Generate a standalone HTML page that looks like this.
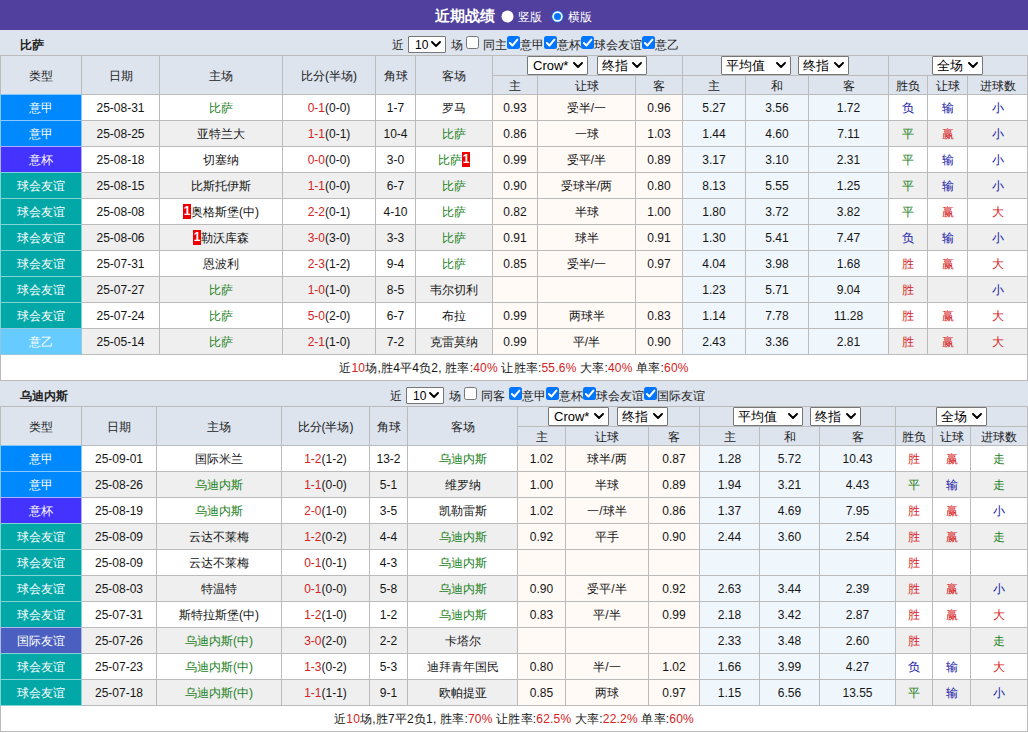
<!DOCTYPE html><html><head><meta charset="utf-8"><style>
html,body{margin:0;padding:0;}
body{width:1028px;height:733px;position:relative;overflow:hidden;background:#fff;font-family:"Liberation Sans",sans-serif;font-size:12px;color:#151515;}
.a{position:absolute;}
.c{text-align:center;white-space:nowrap;overflow:hidden;}
.h{color:#1a1a1a;}
.ty{color:#fff;}
.tb{height:20px;line-height:20px;font-size:12px;color:#222;white-space:nowrap;}
.sel{background:#fff;border:1px solid #767676;border-radius:1px;color:#000;white-space:nowrap;}
.rc{display:inline-block;background:#e00;color:#fff;font-weight:bold;font-size:12px;width:8px;height:15px;line-height:15px;text-align:center;vertical-align:-3px;overflow:hidden;}
</style></head><body><div class="a" style="left:0px;top:0px;width:1028px;height:30px;background:#51409e;"></div><div class="a" style="left:435px;top:6px;height:20px;line-height:20px;font-size:15px;font-weight:bold;color:#fff;white-space:nowrap">近期战绩</div><svg class="a" style="left:501px;top:10px" width="13" height="13" viewBox="0 0 13 13"><circle cx="6.5" cy="6.5" r="6" fill="#fff"/></svg><div class="a" style="left:518px;top:7px;height:20px;line-height:20px;font-size:12px;color:#fff;white-space:nowrap">竖版</div><svg class="a" style="left:551px;top:10px" width="13" height="13" viewBox="0 0 13 13"><circle cx="6.5" cy="6.5" r="6" fill="#0075ff"/><circle cx="6.5" cy="6.5" r="5.2" fill="#fff"/><circle cx="6.5" cy="6.5" r="3.5" fill="#0075ff"/></svg><div class="a" style="left:568px;top:7px;height:20px;line-height:20px;font-size:12px;color:#fff;white-space:nowrap">横版</div><div class="a" style="left:0px;top:30px;width:1028px;height:25px;background:#dde4ee;"></div><div class="a" style="left:20px;top:35px;height:20px;line-height:20px;font-size:12px;font-weight:bold;color:#222;white-space:nowrap">比萨</div><div class="a tb" style="left:392px;top:35px">近</div><div class="a sel" style="left:408px;top:36px;width:36px;height:15px;"><span style="position:absolute;left:6px;top:0;line-height:15px;font-size:12px;top:1px;">10</span><svg width="10" height="6" viewBox="0 0 10 6" style="position:absolute;right:4px;top:4px"><path d="M1 1 L5 5 L9 1" fill="none" stroke="#000" stroke-width="1.9" stroke-linecap="round" stroke-linejoin="round"/></svg></div><div class="a tb" style="left:451px;top:35px">场</div><svg class="a" style="left:466px;top:36px" width="13" height="13" viewBox="0 0 13 13"><rect x="0.5" y="0.5" width="12" height="12" rx="2" fill="#fff" stroke="#767676" stroke-width="1"/></svg><div class="a tb" style="left:483px;top:35px">同主</div><svg class="a" style="left:507px;top:36px" width="13" height="13" viewBox="0 0 13 13"><rect x="0" y="0" width="13" height="13" rx="2.5" fill="#0075ff"/><path d="M2.9 7.0 L5.4 9.5 L10.4 3.6" fill="none" stroke="#fff" stroke-width="2" stroke-linecap="round" stroke-linejoin="round"/></svg><div class="a tb" style="left:520px;top:35px">意甲</div><svg class="a" style="left:544px;top:36px" width="13" height="13" viewBox="0 0 13 13"><rect x="0" y="0" width="13" height="13" rx="2.5" fill="#0075ff"/><path d="M2.9 7.0 L5.4 9.5 L10.4 3.6" fill="none" stroke="#fff" stroke-width="2" stroke-linecap="round" stroke-linejoin="round"/></svg><div class="a tb" style="left:557px;top:35px">意杯</div><svg class="a" style="left:581px;top:36px" width="13" height="13" viewBox="0 0 13 13"><rect x="0" y="0" width="13" height="13" rx="2.5" fill="#0075ff"/><path d="M2.9 7.0 L5.4 9.5 L10.4 3.6" fill="none" stroke="#fff" stroke-width="2" stroke-linecap="round" stroke-linejoin="round"/></svg><div class="a tb" style="left:594px;top:35px">球会友谊</div><svg class="a" style="left:642px;top:36px" width="13" height="13" viewBox="0 0 13 13"><rect x="0" y="0" width="13" height="13" rx="2.5" fill="#0075ff"/><path d="M2.9 7.0 L5.4 9.5 L10.4 3.6" fill="none" stroke="#fff" stroke-width="2" stroke-linecap="round" stroke-linejoin="round"/></svg><div class="a tb" style="left:655px;top:35px">意乙</div><div class="a" style="left:0px;top:55px;width:1028px;height:40px;background:#dde4ee;"></div><div class="a" style="left:0px;top:95px;width:1027px;height:26px;background:#ffffff;"></div><div class="a" style="left:493px;top:95px;width:190px;height:25px;background:#fffaf6;"></div><div class="a" style="left:683px;top:95px;width:206px;height:25px;background:#f0f7fc;"></div><div class="a" style="left:1px;top:95px;width:80px;height:25px;background:#0088ff;"></div><div class="a" style="left:0px;top:121px;width:1027px;height:26px;background:#efefef;"></div><div class="a" style="left:493px;top:121px;width:190px;height:25px;background:#fffaf6;"></div><div class="a" style="left:683px;top:121px;width:206px;height:25px;background:#f0f7fc;"></div><div class="a" style="left:1px;top:121px;width:80px;height:25px;background:#0088ff;"></div><div class="a" style="left:0px;top:147px;width:1027px;height:26px;background:#ffffff;"></div><div class="a" style="left:493px;top:147px;width:190px;height:25px;background:#fffaf6;"></div><div class="a" style="left:683px;top:147px;width:206px;height:25px;background:#f0f7fc;"></div><div class="a" style="left:1px;top:147px;width:80px;height:25px;background:#4433ff;"></div><div class="a" style="left:0px;top:173px;width:1027px;height:26px;background:#efefef;"></div><div class="a" style="left:493px;top:173px;width:190px;height:25px;background:#fffaf6;"></div><div class="a" style="left:683px;top:173px;width:206px;height:25px;background:#f0f7fc;"></div><div class="a" style="left:1px;top:173px;width:80px;height:25px;background:#02a8a8;"></div><div class="a" style="left:0px;top:199px;width:1027px;height:26px;background:#ffffff;"></div><div class="a" style="left:493px;top:199px;width:190px;height:25px;background:#fffaf6;"></div><div class="a" style="left:683px;top:199px;width:206px;height:25px;background:#f0f7fc;"></div><div class="a" style="left:1px;top:199px;width:80px;height:25px;background:#02a8a8;"></div><div class="a" style="left:0px;top:225px;width:1027px;height:26px;background:#efefef;"></div><div class="a" style="left:493px;top:225px;width:190px;height:25px;background:#fffaf6;"></div><div class="a" style="left:683px;top:225px;width:206px;height:25px;background:#f0f7fc;"></div><div class="a" style="left:1px;top:225px;width:80px;height:25px;background:#02a8a8;"></div><div class="a" style="left:0px;top:251px;width:1027px;height:26px;background:#ffffff;"></div><div class="a" style="left:493px;top:251px;width:190px;height:25px;background:#fffaf6;"></div><div class="a" style="left:683px;top:251px;width:206px;height:25px;background:#f0f7fc;"></div><div class="a" style="left:1px;top:251px;width:80px;height:25px;background:#02a8a8;"></div><div class="a" style="left:0px;top:277px;width:1027px;height:26px;background:#efefef;"></div><div class="a" style="left:493px;top:277px;width:190px;height:25px;background:#fffaf6;"></div><div class="a" style="left:683px;top:277px;width:206px;height:25px;background:#f0f7fc;"></div><div class="a" style="left:1px;top:277px;width:80px;height:25px;background:#02a8a8;"></div><div class="a" style="left:0px;top:303px;width:1027px;height:26px;background:#ffffff;"></div><div class="a" style="left:493px;top:303px;width:190px;height:25px;background:#fffaf6;"></div><div class="a" style="left:683px;top:303px;width:206px;height:25px;background:#f0f7fc;"></div><div class="a" style="left:1px;top:303px;width:80px;height:25px;background:#02a8a8;"></div><div class="a" style="left:0px;top:329px;width:1027px;height:26px;background:#efefef;"></div><div class="a" style="left:493px;top:329px;width:190px;height:25px;background:#fffaf6;"></div><div class="a" style="left:683px;top:329px;width:206px;height:25px;background:#f0f7fc;"></div><div class="a" style="left:1px;top:329px;width:80px;height:25px;background:#66ccff;"></div><div class="a" style="left:0px;top:355px;width:1028px;height:26px;background:#fff;"></div><div class="a" style="left:0px;top:55px;width:1028px;height:1px;background:#bbbbbb;"></div><div class="a" style="left:492px;top:75px;width:535px;height:1px;background:#bbbbbb;"></div><div class="a" style="left:0px;top:94px;width:1028px;height:1px;background:#bbbbbb;"></div><div class="a" style="left:0px;top:120px;width:1028px;height:1px;background:#bbbbbb;"></div><div class="a" style="left:0px;top:146px;width:1028px;height:1px;background:#bbbbbb;"></div><div class="a" style="left:0px;top:172px;width:1028px;height:1px;background:#bbbbbb;"></div><div class="a" style="left:0px;top:198px;width:1028px;height:1px;background:#bbbbbb;"></div><div class="a" style="left:0px;top:224px;width:1028px;height:1px;background:#bbbbbb;"></div><div class="a" style="left:0px;top:250px;width:1028px;height:1px;background:#bbbbbb;"></div><div class="a" style="left:0px;top:276px;width:1028px;height:1px;background:#bbbbbb;"></div><div class="a" style="left:0px;top:302px;width:1028px;height:1px;background:#bbbbbb;"></div><div class="a" style="left:0px;top:328px;width:1028px;height:1px;background:#bbbbbb;"></div><div class="a" style="left:0px;top:354px;width:1028px;height:1px;background:#bbbbbb;"></div><div class="a" style="left:0px;top:380px;width:1028px;height:1px;background:#bbbbbb;"></div><div class="a" style="left:0px;top:55px;width:1px;height:326px;background:#bbbbbb;"></div><div class="a" style="left:1027px;top:55px;width:1px;height:326px;background:#bbbbbb;"></div><div class="a" style="left:81px;top:55px;width:1px;height:300px;background:#bbbbbb;"></div><div class="a" style="left:159px;top:55px;width:1px;height:300px;background:#bbbbbb;"></div><div class="a" style="left:282px;top:55px;width:1px;height:300px;background:#bbbbbb;"></div><div class="a" style="left:375px;top:55px;width:1px;height:300px;background:#bbbbbb;"></div><div class="a" style="left:415px;top:55px;width:1px;height:300px;background:#bbbbbb;"></div><div class="a" style="left:492px;top:55px;width:1px;height:300px;background:#bbbbbb;"></div><div class="a" style="left:537px;top:75px;width:1px;height:280px;background:#bbbbbb;"></div><div class="a" style="left:635px;top:75px;width:1px;height:280px;background:#bbbbbb;"></div><div class="a" style="left:682px;top:55px;width:1px;height:300px;background:#bbbbbb;"></div><div class="a" style="left:745px;top:75px;width:1px;height:280px;background:#bbbbbb;"></div><div class="a" style="left:808px;top:75px;width:1px;height:280px;background:#bbbbbb;"></div><div class="a" style="left:888px;top:55px;width:1px;height:300px;background:#bbbbbb;"></div><div class="a" style="left:927px;top:75px;width:1px;height:280px;background:#bbbbbb;"></div><div class="a" style="left:967px;top:75px;width:1px;height:280px;background:#bbbbbb;"></div><div class="a" style="left:0px;top:94px;width:1px;height:27px;background:#85c9ff;"></div><div class="a" style="left:81px;top:94px;width:1px;height:27px;background:#85c9ff;"></div><div class="a" style="left:0px;top:94px;width:82px;height:1px;background:#85c9ff;"></div><div class="a" style="left:0px;top:120px;width:82px;height:1px;background:#85c9ff;"></div><div class="a" style="left:0px;top:120px;width:1px;height:27px;background:#85c9ff;"></div><div class="a" style="left:81px;top:120px;width:1px;height:27px;background:#85c9ff;"></div><div class="a" style="left:0px;top:120px;width:82px;height:1px;background:#85c9ff;"></div><div class="a" style="left:0px;top:146px;width:82px;height:1px;background:#85c9ff;"></div><div class="a" style="left:0px;top:146px;width:1px;height:27px;background:#b5adff;"></div><div class="a" style="left:81px;top:146px;width:1px;height:27px;background:#b5adff;"></div><div class="a" style="left:0px;top:146px;width:82px;height:1px;background:#b5adff;"></div><div class="a" style="left:0px;top:172px;width:82px;height:1px;background:#b5adff;"></div><div class="a" style="left:0px;top:172px;width:1px;height:27px;background:#81d4d4;"></div><div class="a" style="left:81px;top:172px;width:1px;height:27px;background:#81d4d4;"></div><div class="a" style="left:0px;top:172px;width:82px;height:1px;background:#81d4d4;"></div><div class="a" style="left:0px;top:198px;width:82px;height:1px;background:#81d4d4;"></div><div class="a" style="left:0px;top:198px;width:1px;height:27px;background:#81d4d4;"></div><div class="a" style="left:81px;top:198px;width:1px;height:27px;background:#81d4d4;"></div><div class="a" style="left:0px;top:198px;width:82px;height:1px;background:#81d4d4;"></div><div class="a" style="left:0px;top:224px;width:82px;height:1px;background:#81d4d4;"></div><div class="a" style="left:0px;top:224px;width:1px;height:27px;background:#81d4d4;"></div><div class="a" style="left:81px;top:224px;width:1px;height:27px;background:#81d4d4;"></div><div class="a" style="left:0px;top:224px;width:82px;height:1px;background:#81d4d4;"></div><div class="a" style="left:0px;top:250px;width:82px;height:1px;background:#81d4d4;"></div><div class="a" style="left:0px;top:250px;width:1px;height:27px;background:#81d4d4;"></div><div class="a" style="left:81px;top:250px;width:1px;height:27px;background:#81d4d4;"></div><div class="a" style="left:0px;top:250px;width:82px;height:1px;background:#81d4d4;"></div><div class="a" style="left:0px;top:276px;width:82px;height:1px;background:#81d4d4;"></div><div class="a" style="left:0px;top:276px;width:1px;height:27px;background:#81d4d4;"></div><div class="a" style="left:81px;top:276px;width:1px;height:27px;background:#81d4d4;"></div><div class="a" style="left:0px;top:276px;width:82px;height:1px;background:#81d4d4;"></div><div class="a" style="left:0px;top:302px;width:82px;height:1px;background:#81d4d4;"></div><div class="a" style="left:0px;top:302px;width:1px;height:27px;background:#81d4d4;"></div><div class="a" style="left:81px;top:302px;width:1px;height:27px;background:#81d4d4;"></div><div class="a" style="left:0px;top:302px;width:82px;height:1px;background:#81d4d4;"></div><div class="a" style="left:0px;top:328px;width:82px;height:1px;background:#81d4d4;"></div><div class="a" style="left:0px;top:328px;width:1px;height:27px;background:#94c7e1;"></div><div class="a" style="left:81px;top:328px;width:1px;height:27px;background:#94c7e1;"></div><div class="a" style="left:0px;top:328px;width:82px;height:1px;background:#94c7e1;"></div><div class="a" style="left:0px;top:354px;width:82px;height:1px;background:#94c7e1;"></div><div class="a c h" style="left:1px;top:57px;width:80px;height:38px;line-height:38px;">类型</div><div class="a c h" style="left:82px;top:57px;width:77px;height:38px;line-height:38px;">日期</div><div class="a c h" style="left:160px;top:57px;width:122px;height:38px;line-height:38px;">主场</div><div class="a c h" style="left:283px;top:57px;width:92px;height:38px;line-height:38px;">比分(半场)</div><div class="a c h" style="left:376px;top:57px;width:39px;height:38px;line-height:38px;">角球</div><div class="a c h" style="left:416px;top:57px;width:76px;height:38px;line-height:38px;">客场</div><div class="a c h" style="left:493px;top:77px;width:44px;height:18px;line-height:18px;">主</div><div class="a c h" style="left:538px;top:77px;width:97px;height:18px;line-height:18px;">让球</div><div class="a c h" style="left:636px;top:77px;width:46px;height:18px;line-height:18px;">客</div><div class="a c h" style="left:683px;top:77px;width:62px;height:18px;line-height:18px;">主</div><div class="a c h" style="left:746px;top:77px;width:62px;height:18px;line-height:18px;">和</div><div class="a c h" style="left:809px;top:77px;width:79px;height:18px;line-height:18px;">客</div><div class="a c h" style="left:889px;top:77px;width:38px;height:18px;line-height:18px;">胜负</div><div class="a c h" style="left:928px;top:77px;width:39px;height:18px;line-height:18px;">让球</div><div class="a c h" style="left:968px;top:77px;width:59px;height:18px;line-height:18px;">进球数</div><div class="a c ty" style="left:1px;top:96px;width:80px;height:25px;line-height:25px;">意甲</div><div class="a c" style="left:82px;top:96px;width:77px;height:25px;line-height:25px;">25-08-31</div><div class="a c" style="left:160px;top:96px;width:122px;height:25px;line-height:25px;"><span style="color:#1b7f1b">比萨</span></div><div class="a c" style="left:283px;top:96px;width:92px;height:25px;line-height:25px;"><span style="color:#d62222">0-1</span>(0-0)</div><div class="a c" style="left:376px;top:96px;width:39px;height:25px;line-height:25px;">1-7</div><div class="a c" style="left:416px;top:96px;width:76px;height:25px;line-height:25px;">罗马</div><div class="a c" style="left:493px;top:96px;width:44px;height:25px;line-height:25px;">0.93</div><div class="a c" style="left:538px;top:96px;width:97px;height:25px;line-height:25px;">受半/一</div><div class="a c" style="left:636px;top:96px;width:46px;height:25px;line-height:25px;">0.96</div><div class="a c" style="left:683px;top:96px;width:62px;height:25px;line-height:25px;">5.27</div><div class="a c" style="left:746px;top:96px;width:62px;height:25px;line-height:25px;">3.56</div><div class="a c" style="left:809px;top:96px;width:79px;height:25px;line-height:25px;">1.72</div><div class="a c" style="left:889px;top:96px;width:38px;height:25px;line-height:25px;"><span style="color:#1414a8">负</span></div><div class="a c" style="left:928px;top:96px;width:39px;height:25px;line-height:25px;"><span style="color:#1414a8">输</span></div><div class="a c" style="left:968px;top:96px;width:59px;height:25px;line-height:25px;"><span style="color:#1414a8">小</span></div><div class="a c ty" style="left:1px;top:122px;width:80px;height:25px;line-height:25px;">意甲</div><div class="a c" style="left:82px;top:122px;width:77px;height:25px;line-height:25px;">25-08-25</div><div class="a c" style="left:160px;top:122px;width:122px;height:25px;line-height:25px;">亚特兰大</div><div class="a c" style="left:283px;top:122px;width:92px;height:25px;line-height:25px;"><span style="color:#d62222">1-1</span>(0-1)</div><div class="a c" style="left:376px;top:122px;width:39px;height:25px;line-height:25px;">10-4</div><div class="a c" style="left:416px;top:122px;width:76px;height:25px;line-height:25px;"><span style="color:#1b7f1b">比萨</span></div><div class="a c" style="left:493px;top:122px;width:44px;height:25px;line-height:25px;">0.86</div><div class="a c" style="left:538px;top:122px;width:97px;height:25px;line-height:25px;">一球</div><div class="a c" style="left:636px;top:122px;width:46px;height:25px;line-height:25px;">1.03</div><div class="a c" style="left:683px;top:122px;width:62px;height:25px;line-height:25px;">1.44</div><div class="a c" style="left:746px;top:122px;width:62px;height:25px;line-height:25px;">4.60</div><div class="a c" style="left:809px;top:122px;width:79px;height:25px;line-height:25px;">7.11</div><div class="a c" style="left:889px;top:122px;width:38px;height:25px;line-height:25px;"><span style="color:#1b7f1b">平</span></div><div class="a c" style="left:928px;top:122px;width:39px;height:25px;line-height:25px;"><span style="color:#d62222">赢</span></div><div class="a c" style="left:968px;top:122px;width:59px;height:25px;line-height:25px;"><span style="color:#1414a8">小</span></div><div class="a c ty" style="left:1px;top:148px;width:80px;height:25px;line-height:25px;">意杯</div><div class="a c" style="left:82px;top:148px;width:77px;height:25px;line-height:25px;">25-08-18</div><div class="a c" style="left:160px;top:148px;width:122px;height:25px;line-height:25px;">切塞纳</div><div class="a c" style="left:283px;top:148px;width:92px;height:25px;line-height:25px;"><span style="color:#d62222">0-0</span>(0-0)</div><div class="a c" style="left:376px;top:148px;width:39px;height:25px;line-height:25px;">3-0</div><div class="a c" style="left:416px;top:148px;width:76px;height:25px;line-height:25px;"><span style="color:#1b7f1b">比萨</span><span class="rc">1</span></div><div class="a c" style="left:493px;top:148px;width:44px;height:25px;line-height:25px;">0.99</div><div class="a c" style="left:538px;top:148px;width:97px;height:25px;line-height:25px;">受平/半</div><div class="a c" style="left:636px;top:148px;width:46px;height:25px;line-height:25px;">0.89</div><div class="a c" style="left:683px;top:148px;width:62px;height:25px;line-height:25px;">3.17</div><div class="a c" style="left:746px;top:148px;width:62px;height:25px;line-height:25px;">3.10</div><div class="a c" style="left:809px;top:148px;width:79px;height:25px;line-height:25px;">2.31</div><div class="a c" style="left:889px;top:148px;width:38px;height:25px;line-height:25px;"><span style="color:#1b7f1b">平</span></div><div class="a c" style="left:928px;top:148px;width:39px;height:25px;line-height:25px;"><span style="color:#1414a8">输</span></div><div class="a c" style="left:968px;top:148px;width:59px;height:25px;line-height:25px;"><span style="color:#1414a8">小</span></div><div class="a c ty" style="left:1px;top:174px;width:80px;height:25px;line-height:25px;">球会友谊</div><div class="a c" style="left:82px;top:174px;width:77px;height:25px;line-height:25px;">25-08-15</div><div class="a c" style="left:160px;top:174px;width:122px;height:25px;line-height:25px;">比斯托伊斯</div><div class="a c" style="left:283px;top:174px;width:92px;height:25px;line-height:25px;"><span style="color:#d62222">1-1</span>(0-0)</div><div class="a c" style="left:376px;top:174px;width:39px;height:25px;line-height:25px;">6-7</div><div class="a c" style="left:416px;top:174px;width:76px;height:25px;line-height:25px;"><span style="color:#1b7f1b">比萨</span></div><div class="a c" style="left:493px;top:174px;width:44px;height:25px;line-height:25px;">0.90</div><div class="a c" style="left:538px;top:174px;width:97px;height:25px;line-height:25px;">受球半/两</div><div class="a c" style="left:636px;top:174px;width:46px;height:25px;line-height:25px;">0.80</div><div class="a c" style="left:683px;top:174px;width:62px;height:25px;line-height:25px;">8.13</div><div class="a c" style="left:746px;top:174px;width:62px;height:25px;line-height:25px;">5.55</div><div class="a c" style="left:809px;top:174px;width:79px;height:25px;line-height:25px;">1.25</div><div class="a c" style="left:889px;top:174px;width:38px;height:25px;line-height:25px;"><span style="color:#1b7f1b">平</span></div><div class="a c" style="left:928px;top:174px;width:39px;height:25px;line-height:25px;"><span style="color:#1414a8">输</span></div><div class="a c" style="left:968px;top:174px;width:59px;height:25px;line-height:25px;"><span style="color:#1414a8">小</span></div><div class="a c ty" style="left:1px;top:200px;width:80px;height:25px;line-height:25px;">球会友谊</div><div class="a c" style="left:82px;top:200px;width:77px;height:25px;line-height:25px;">25-08-08</div><div class="a c" style="left:160px;top:200px;width:122px;height:25px;line-height:25px;"><span class="rc">1</span>奥格斯堡(中)</div><div class="a c" style="left:283px;top:200px;width:92px;height:25px;line-height:25px;"><span style="color:#d62222">2-2</span>(0-1)</div><div class="a c" style="left:376px;top:200px;width:39px;height:25px;line-height:25px;">4-10</div><div class="a c" style="left:416px;top:200px;width:76px;height:25px;line-height:25px;"><span style="color:#1b7f1b">比萨</span></div><div class="a c" style="left:493px;top:200px;width:44px;height:25px;line-height:25px;">0.82</div><div class="a c" style="left:538px;top:200px;width:97px;height:25px;line-height:25px;">半球</div><div class="a c" style="left:636px;top:200px;width:46px;height:25px;line-height:25px;">1.00</div><div class="a c" style="left:683px;top:200px;width:62px;height:25px;line-height:25px;">1.80</div><div class="a c" style="left:746px;top:200px;width:62px;height:25px;line-height:25px;">3.72</div><div class="a c" style="left:809px;top:200px;width:79px;height:25px;line-height:25px;">3.82</div><div class="a c" style="left:889px;top:200px;width:38px;height:25px;line-height:25px;"><span style="color:#1b7f1b">平</span></div><div class="a c" style="left:928px;top:200px;width:39px;height:25px;line-height:25px;"><span style="color:#d62222">赢</span></div><div class="a c" style="left:968px;top:200px;width:59px;height:25px;line-height:25px;"><span style="color:#d62222">大</span></div><div class="a c ty" style="left:1px;top:226px;width:80px;height:25px;line-height:25px;">球会友谊</div><div class="a c" style="left:82px;top:226px;width:77px;height:25px;line-height:25px;">25-08-06</div><div class="a c" style="left:160px;top:226px;width:122px;height:25px;line-height:25px;"><span class="rc">1</span>勒沃库森</div><div class="a c" style="left:283px;top:226px;width:92px;height:25px;line-height:25px;"><span style="color:#d62222">3-0</span>(3-0)</div><div class="a c" style="left:376px;top:226px;width:39px;height:25px;line-height:25px;">3-3</div><div class="a c" style="left:416px;top:226px;width:76px;height:25px;line-height:25px;"><span style="color:#1b7f1b">比萨</span></div><div class="a c" style="left:493px;top:226px;width:44px;height:25px;line-height:25px;">0.91</div><div class="a c" style="left:538px;top:226px;width:97px;height:25px;line-height:25px;">球半</div><div class="a c" style="left:636px;top:226px;width:46px;height:25px;line-height:25px;">0.91</div><div class="a c" style="left:683px;top:226px;width:62px;height:25px;line-height:25px;">1.30</div><div class="a c" style="left:746px;top:226px;width:62px;height:25px;line-height:25px;">5.41</div><div class="a c" style="left:809px;top:226px;width:79px;height:25px;line-height:25px;">7.47</div><div class="a c" style="left:889px;top:226px;width:38px;height:25px;line-height:25px;"><span style="color:#1414a8">负</span></div><div class="a c" style="left:928px;top:226px;width:39px;height:25px;line-height:25px;"><span style="color:#1414a8">输</span></div><div class="a c" style="left:968px;top:226px;width:59px;height:25px;line-height:25px;"><span style="color:#1414a8">小</span></div><div class="a c ty" style="left:1px;top:252px;width:80px;height:25px;line-height:25px;">球会友谊</div><div class="a c" style="left:82px;top:252px;width:77px;height:25px;line-height:25px;">25-07-31</div><div class="a c" style="left:160px;top:252px;width:122px;height:25px;line-height:25px;">恩波利</div><div class="a c" style="left:283px;top:252px;width:92px;height:25px;line-height:25px;"><span style="color:#d62222">2-3</span>(1-2)</div><div class="a c" style="left:376px;top:252px;width:39px;height:25px;line-height:25px;">9-4</div><div class="a c" style="left:416px;top:252px;width:76px;height:25px;line-height:25px;"><span style="color:#1b7f1b">比萨</span></div><div class="a c" style="left:493px;top:252px;width:44px;height:25px;line-height:25px;">0.85</div><div class="a c" style="left:538px;top:252px;width:97px;height:25px;line-height:25px;">受半/一</div><div class="a c" style="left:636px;top:252px;width:46px;height:25px;line-height:25px;">0.97</div><div class="a c" style="left:683px;top:252px;width:62px;height:25px;line-height:25px;">4.04</div><div class="a c" style="left:746px;top:252px;width:62px;height:25px;line-height:25px;">3.98</div><div class="a c" style="left:809px;top:252px;width:79px;height:25px;line-height:25px;">1.68</div><div class="a c" style="left:889px;top:252px;width:38px;height:25px;line-height:25px;"><span style="color:#d62222">胜</span></div><div class="a c" style="left:928px;top:252px;width:39px;height:25px;line-height:25px;"><span style="color:#d62222">赢</span></div><div class="a c" style="left:968px;top:252px;width:59px;height:25px;line-height:25px;"><span style="color:#d62222">大</span></div><div class="a c ty" style="left:1px;top:278px;width:80px;height:25px;line-height:25px;">球会友谊</div><div class="a c" style="left:82px;top:278px;width:77px;height:25px;line-height:25px;">25-07-27</div><div class="a c" style="left:160px;top:278px;width:122px;height:25px;line-height:25px;"><span style="color:#1b7f1b">比萨</span></div><div class="a c" style="left:283px;top:278px;width:92px;height:25px;line-height:25px;"><span style="color:#d62222">1-0</span>(1-0)</div><div class="a c" style="left:376px;top:278px;width:39px;height:25px;line-height:25px;">8-5</div><div class="a c" style="left:416px;top:278px;width:76px;height:25px;line-height:25px;">韦尔切利</div><div class="a c" style="left:493px;top:278px;width:44px;height:25px;line-height:25px;"></div><div class="a c" style="left:538px;top:278px;width:97px;height:25px;line-height:25px;"></div><div class="a c" style="left:636px;top:278px;width:46px;height:25px;line-height:25px;"></div><div class="a c" style="left:683px;top:278px;width:62px;height:25px;line-height:25px;">1.23</div><div class="a c" style="left:746px;top:278px;width:62px;height:25px;line-height:25px;">5.71</div><div class="a c" style="left:809px;top:278px;width:79px;height:25px;line-height:25px;">9.04</div><div class="a c" style="left:889px;top:278px;width:38px;height:25px;line-height:25px;"><span style="color:#d62222">胜</span></div><div class="a c" style="left:928px;top:278px;width:39px;height:25px;line-height:25px;"></div><div class="a c" style="left:968px;top:278px;width:59px;height:25px;line-height:25px;"><span style="color:#1414a8">小</span></div><div class="a c ty" style="left:1px;top:304px;width:80px;height:25px;line-height:25px;">球会友谊</div><div class="a c" style="left:82px;top:304px;width:77px;height:25px;line-height:25px;">25-07-24</div><div class="a c" style="left:160px;top:304px;width:122px;height:25px;line-height:25px;"><span style="color:#1b7f1b">比萨</span></div><div class="a c" style="left:283px;top:304px;width:92px;height:25px;line-height:25px;"><span style="color:#d62222">5-0</span>(2-0)</div><div class="a c" style="left:376px;top:304px;width:39px;height:25px;line-height:25px;">6-7</div><div class="a c" style="left:416px;top:304px;width:76px;height:25px;line-height:25px;">布拉</div><div class="a c" style="left:493px;top:304px;width:44px;height:25px;line-height:25px;">0.99</div><div class="a c" style="left:538px;top:304px;width:97px;height:25px;line-height:25px;">两球半</div><div class="a c" style="left:636px;top:304px;width:46px;height:25px;line-height:25px;">0.83</div><div class="a c" style="left:683px;top:304px;width:62px;height:25px;line-height:25px;">1.14</div><div class="a c" style="left:746px;top:304px;width:62px;height:25px;line-height:25px;">7.78</div><div class="a c" style="left:809px;top:304px;width:79px;height:25px;line-height:25px;">11.28</div><div class="a c" style="left:889px;top:304px;width:38px;height:25px;line-height:25px;"><span style="color:#d62222">胜</span></div><div class="a c" style="left:928px;top:304px;width:39px;height:25px;line-height:25px;"><span style="color:#d62222">赢</span></div><div class="a c" style="left:968px;top:304px;width:59px;height:25px;line-height:25px;"><span style="color:#d62222">大</span></div><div class="a c ty" style="left:1px;top:330px;width:80px;height:25px;line-height:25px;">意乙</div><div class="a c" style="left:82px;top:330px;width:77px;height:25px;line-height:25px;">25-05-14</div><div class="a c" style="left:160px;top:330px;width:122px;height:25px;line-height:25px;"><span style="color:#1b7f1b">比萨</span></div><div class="a c" style="left:283px;top:330px;width:92px;height:25px;line-height:25px;"><span style="color:#d62222">2-1</span>(1-0)</div><div class="a c" style="left:376px;top:330px;width:39px;height:25px;line-height:25px;">7-2</div><div class="a c" style="left:416px;top:330px;width:76px;height:25px;line-height:25px;">克雷莫纳</div><div class="a c" style="left:493px;top:330px;width:44px;height:25px;line-height:25px;">0.99</div><div class="a c" style="left:538px;top:330px;width:97px;height:25px;line-height:25px;">平/半</div><div class="a c" style="left:636px;top:330px;width:46px;height:25px;line-height:25px;">0.90</div><div class="a c" style="left:683px;top:330px;width:62px;height:25px;line-height:25px;">2.43</div><div class="a c" style="left:746px;top:330px;width:62px;height:25px;line-height:25px;">3.36</div><div class="a c" style="left:809px;top:330px;width:79px;height:25px;line-height:25px;">2.81</div><div class="a c" style="left:889px;top:330px;width:38px;height:25px;line-height:25px;"><span style="color:#d62222">胜</span></div><div class="a c" style="left:928px;top:330px;width:39px;height:25px;line-height:25px;"><span style="color:#d62222">赢</span></div><div class="a c" style="left:968px;top:330px;width:59px;height:25px;line-height:25px;"><span style="color:#d62222">大</span></div><div class="a c" style="left:1px;top:356px;width:1026px;height:25px;line-height:25px;letter-spacing:0.2px;">近<span style="color:#d62222">10</span>场,胜4平4负2, 胜率:<span style="color:#d62222">40%</span> 让胜率:<span style="color:#d62222">55.6%</span> 大率:<span style="color:#d62222">40%</span> 单率:<span style="color:#d62222">60%</span></div><div class="a sel" style="left:527px;top:56px;width:59px;height:17px;"><span style="position:absolute;left:5px;top:0;line-height:17px;font-size:13px;">Crow*</span><svg width="10" height="6" viewBox="0 0 10 6" style="position:absolute;right:4px;top:5px"><path d="M1 1 L5 5 L9 1" fill="none" stroke="#000" stroke-width="1.9" stroke-linecap="round" stroke-linejoin="round"/></svg></div><div class="a sel" style="left:597px;top:56px;width:48px;height:17px;"><span style="position:absolute;left:4px;top:0;line-height:17px;font-size:13px;">终指</span><svg width="10" height="6" viewBox="0 0 10 6" style="position:absolute;right:4px;top:5px"><path d="M1 1 L5 5 L9 1" fill="none" stroke="#000" stroke-width="1.9" stroke-linecap="round" stroke-linejoin="round"/></svg></div><div class="a sel" style="left:721px;top:56px;width:68px;height:17px;"><span style="position:absolute;left:4px;top:0;line-height:17px;font-size:13px;">平均值</span><svg width="10" height="6" viewBox="0 0 10 6" style="position:absolute;right:4px;top:5px"><path d="M1 1 L5 5 L9 1" fill="none" stroke="#000" stroke-width="1.9" stroke-linecap="round" stroke-linejoin="round"/></svg></div><div class="a sel" style="left:798px;top:56px;width:49px;height:17px;"><span style="position:absolute;left:4px;top:0;line-height:17px;font-size:13px;">终指</span><svg width="10" height="6" viewBox="0 0 10 6" style="position:absolute;right:4px;top:5px"><path d="M1 1 L5 5 L9 1" fill="none" stroke="#000" stroke-width="1.9" stroke-linecap="round" stroke-linejoin="round"/></svg></div><div class="a sel" style="left:932px;top:56px;width:49px;height:17px;"><span style="position:absolute;left:4px;top:0;line-height:17px;font-size:13px;">全场</span><svg width="10" height="6" viewBox="0 0 10 6" style="position:absolute;right:4px;top:5px"><path d="M1 1 L5 5 L9 1" fill="none" stroke="#000" stroke-width="1.9" stroke-linecap="round" stroke-linejoin="round"/></svg></div><div class="a" style="left:0px;top:381px;width:1028px;height:25px;background:#dde4ee;"></div><div class="a" style="left:20px;top:386px;height:20px;line-height:20px;font-size:12px;font-weight:bold;color:#222;white-space:nowrap">乌迪内斯</div><div class="a tb" style="left:390px;top:386px">近</div><div class="a sel" style="left:406px;top:387px;width:36px;height:15px;"><span style="position:absolute;left:6px;top:0;line-height:15px;font-size:12px;top:1px;">10</span><svg width="10" height="6" viewBox="0 0 10 6" style="position:absolute;right:4px;top:4px"><path d="M1 1 L5 5 L9 1" fill="none" stroke="#000" stroke-width="1.9" stroke-linecap="round" stroke-linejoin="round"/></svg></div><div class="a tb" style="left:449px;top:386px">场</div><svg class="a" style="left:464px;top:387px" width="13" height="13" viewBox="0 0 13 13"><rect x="0.5" y="0.5" width="12" height="12" rx="2" fill="#fff" stroke="#767676" stroke-width="1"/></svg><div class="a tb" style="left:481px;top:386px">同客</div><svg class="a" style="left:509px;top:387px" width="13" height="13" viewBox="0 0 13 13"><rect x="0" y="0" width="13" height="13" rx="2.5" fill="#0075ff"/><path d="M2.9 7.0 L5.4 9.5 L10.4 3.6" fill="none" stroke="#fff" stroke-width="2" stroke-linecap="round" stroke-linejoin="round"/></svg><div class="a tb" style="left:522px;top:386px">意甲</div><svg class="a" style="left:546px;top:387px" width="13" height="13" viewBox="0 0 13 13"><rect x="0" y="0" width="13" height="13" rx="2.5" fill="#0075ff"/><path d="M2.9 7.0 L5.4 9.5 L10.4 3.6" fill="none" stroke="#fff" stroke-width="2" stroke-linecap="round" stroke-linejoin="round"/></svg><div class="a tb" style="left:559px;top:386px">意杯</div><svg class="a" style="left:583px;top:387px" width="13" height="13" viewBox="0 0 13 13"><rect x="0" y="0" width="13" height="13" rx="2.5" fill="#0075ff"/><path d="M2.9 7.0 L5.4 9.5 L10.4 3.6" fill="none" stroke="#fff" stroke-width="2" stroke-linecap="round" stroke-linejoin="round"/></svg><div class="a tb" style="left:596px;top:386px">球会友谊</div><svg class="a" style="left:644px;top:387px" width="13" height="13" viewBox="0 0 13 13"><rect x="0" y="0" width="13" height="13" rx="2.5" fill="#0075ff"/><path d="M2.9 7.0 L5.4 9.5 L10.4 3.6" fill="none" stroke="#fff" stroke-width="2" stroke-linecap="round" stroke-linejoin="round"/></svg><div class="a tb" style="left:657px;top:386px">国际友谊</div><div class="a" style="left:0px;top:406px;width:1028px;height:40px;background:#dde4ee;"></div><div class="a" style="left:0px;top:446px;width:1027px;height:26px;background:#ffffff;"></div><div class="a" style="left:518px;top:446px;width:182px;height:25px;background:#fffaf6;"></div><div class="a" style="left:700px;top:446px;width:196px;height:25px;background:#f0f7fc;"></div><div class="a" style="left:1px;top:446px;width:80px;height:25px;background:#0088ff;"></div><div class="a" style="left:0px;top:472px;width:1027px;height:26px;background:#efefef;"></div><div class="a" style="left:518px;top:472px;width:182px;height:25px;background:#fffaf6;"></div><div class="a" style="left:700px;top:472px;width:196px;height:25px;background:#f0f7fc;"></div><div class="a" style="left:1px;top:472px;width:80px;height:25px;background:#0088ff;"></div><div class="a" style="left:0px;top:498px;width:1027px;height:26px;background:#ffffff;"></div><div class="a" style="left:518px;top:498px;width:182px;height:25px;background:#fffaf6;"></div><div class="a" style="left:700px;top:498px;width:196px;height:25px;background:#f0f7fc;"></div><div class="a" style="left:1px;top:498px;width:80px;height:25px;background:#4433ff;"></div><div class="a" style="left:0px;top:524px;width:1027px;height:26px;background:#efefef;"></div><div class="a" style="left:518px;top:524px;width:182px;height:25px;background:#fffaf6;"></div><div class="a" style="left:700px;top:524px;width:196px;height:25px;background:#f0f7fc;"></div><div class="a" style="left:1px;top:524px;width:80px;height:25px;background:#02a8a8;"></div><div class="a" style="left:0px;top:550px;width:1027px;height:26px;background:#ffffff;"></div><div class="a" style="left:518px;top:550px;width:182px;height:25px;background:#fffaf6;"></div><div class="a" style="left:700px;top:550px;width:196px;height:25px;background:#f0f7fc;"></div><div class="a" style="left:1px;top:550px;width:80px;height:25px;background:#02a8a8;"></div><div class="a" style="left:0px;top:576px;width:1027px;height:26px;background:#efefef;"></div><div class="a" style="left:518px;top:576px;width:182px;height:25px;background:#fffaf6;"></div><div class="a" style="left:700px;top:576px;width:196px;height:25px;background:#f0f7fc;"></div><div class="a" style="left:1px;top:576px;width:80px;height:25px;background:#02a8a8;"></div><div class="a" style="left:0px;top:602px;width:1027px;height:26px;background:#ffffff;"></div><div class="a" style="left:518px;top:602px;width:182px;height:25px;background:#fffaf6;"></div><div class="a" style="left:700px;top:602px;width:196px;height:25px;background:#f0f7fc;"></div><div class="a" style="left:1px;top:602px;width:80px;height:25px;background:#02a8a8;"></div><div class="a" style="left:0px;top:628px;width:1027px;height:26px;background:#efefef;"></div><div class="a" style="left:518px;top:628px;width:182px;height:25px;background:#fffaf6;"></div><div class="a" style="left:700px;top:628px;width:196px;height:25px;background:#f0f7fc;"></div><div class="a" style="left:1px;top:628px;width:80px;height:25px;background:#4b5fc0;"></div><div class="a" style="left:0px;top:654px;width:1027px;height:26px;background:#ffffff;"></div><div class="a" style="left:518px;top:654px;width:182px;height:25px;background:#fffaf6;"></div><div class="a" style="left:700px;top:654px;width:196px;height:25px;background:#f0f7fc;"></div><div class="a" style="left:1px;top:654px;width:80px;height:25px;background:#02a8a8;"></div><div class="a" style="left:0px;top:680px;width:1027px;height:26px;background:#efefef;"></div><div class="a" style="left:518px;top:680px;width:182px;height:25px;background:#fffaf6;"></div><div class="a" style="left:700px;top:680px;width:196px;height:25px;background:#f0f7fc;"></div><div class="a" style="left:1px;top:680px;width:80px;height:25px;background:#02a8a8;"></div><div class="a" style="left:0px;top:706px;width:1028px;height:26px;background:#fff;"></div><div class="a" style="left:0px;top:406px;width:1028px;height:1px;background:#bbbbbb;"></div><div class="a" style="left:517px;top:426px;width:510px;height:1px;background:#bbbbbb;"></div><div class="a" style="left:0px;top:445px;width:1028px;height:1px;background:#bbbbbb;"></div><div class="a" style="left:0px;top:471px;width:1028px;height:1px;background:#bbbbbb;"></div><div class="a" style="left:0px;top:497px;width:1028px;height:1px;background:#bbbbbb;"></div><div class="a" style="left:0px;top:523px;width:1028px;height:1px;background:#bbbbbb;"></div><div class="a" style="left:0px;top:549px;width:1028px;height:1px;background:#bbbbbb;"></div><div class="a" style="left:0px;top:575px;width:1028px;height:1px;background:#bbbbbb;"></div><div class="a" style="left:0px;top:601px;width:1028px;height:1px;background:#bbbbbb;"></div><div class="a" style="left:0px;top:627px;width:1028px;height:1px;background:#bbbbbb;"></div><div class="a" style="left:0px;top:653px;width:1028px;height:1px;background:#bbbbbb;"></div><div class="a" style="left:0px;top:679px;width:1028px;height:1px;background:#bbbbbb;"></div><div class="a" style="left:0px;top:705px;width:1028px;height:1px;background:#bbbbbb;"></div><div class="a" style="left:0px;top:731px;width:1028px;height:1px;background:#bbbbbb;"></div><div class="a" style="left:0px;top:406px;width:1px;height:326px;background:#bbbbbb;"></div><div class="a" style="left:1027px;top:406px;width:1px;height:326px;background:#bbbbbb;"></div><div class="a" style="left:81px;top:406px;width:1px;height:300px;background:#bbbbbb;"></div><div class="a" style="left:156px;top:406px;width:1px;height:300px;background:#bbbbbb;"></div><div class="a" style="left:281px;top:406px;width:1px;height:300px;background:#bbbbbb;"></div><div class="a" style="left:369px;top:406px;width:1px;height:300px;background:#bbbbbb;"></div><div class="a" style="left:407px;top:406px;width:1px;height:300px;background:#bbbbbb;"></div><div class="a" style="left:517px;top:406px;width:1px;height:300px;background:#bbbbbb;"></div><div class="a" style="left:565px;top:426px;width:1px;height:280px;background:#bbbbbb;"></div><div class="a" style="left:648px;top:426px;width:1px;height:280px;background:#bbbbbb;"></div><div class="a" style="left:699px;top:406px;width:1px;height:300px;background:#bbbbbb;"></div><div class="a" style="left:759px;top:426px;width:1px;height:280px;background:#bbbbbb;"></div><div class="a" style="left:819px;top:426px;width:1px;height:280px;background:#bbbbbb;"></div><div class="a" style="left:895px;top:406px;width:1px;height:300px;background:#bbbbbb;"></div><div class="a" style="left:932px;top:426px;width:1px;height:280px;background:#bbbbbb;"></div><div class="a" style="left:970px;top:426px;width:1px;height:280px;background:#bbbbbb;"></div><div class="a" style="left:0px;top:445px;width:1px;height:27px;background:#85c9ff;"></div><div class="a" style="left:81px;top:445px;width:1px;height:27px;background:#85c9ff;"></div><div class="a" style="left:0px;top:445px;width:82px;height:1px;background:#85c9ff;"></div><div class="a" style="left:0px;top:471px;width:82px;height:1px;background:#85c9ff;"></div><div class="a" style="left:0px;top:471px;width:1px;height:27px;background:#85c9ff;"></div><div class="a" style="left:81px;top:471px;width:1px;height:27px;background:#85c9ff;"></div><div class="a" style="left:0px;top:471px;width:82px;height:1px;background:#85c9ff;"></div><div class="a" style="left:0px;top:497px;width:82px;height:1px;background:#85c9ff;"></div><div class="a" style="left:0px;top:497px;width:1px;height:27px;background:#b5adff;"></div><div class="a" style="left:81px;top:497px;width:1px;height:27px;background:#b5adff;"></div><div class="a" style="left:0px;top:497px;width:82px;height:1px;background:#b5adff;"></div><div class="a" style="left:0px;top:523px;width:82px;height:1px;background:#b5adff;"></div><div class="a" style="left:0px;top:523px;width:1px;height:27px;background:#81d4d4;"></div><div class="a" style="left:81px;top:523px;width:1px;height:27px;background:#81d4d4;"></div><div class="a" style="left:0px;top:523px;width:82px;height:1px;background:#81d4d4;"></div><div class="a" style="left:0px;top:549px;width:82px;height:1px;background:#81d4d4;"></div><div class="a" style="left:0px;top:549px;width:1px;height:27px;background:#81d4d4;"></div><div class="a" style="left:81px;top:549px;width:1px;height:27px;background:#81d4d4;"></div><div class="a" style="left:0px;top:549px;width:82px;height:1px;background:#81d4d4;"></div><div class="a" style="left:0px;top:575px;width:82px;height:1px;background:#81d4d4;"></div><div class="a" style="left:0px;top:575px;width:1px;height:27px;background:#81d4d4;"></div><div class="a" style="left:81px;top:575px;width:1px;height:27px;background:#81d4d4;"></div><div class="a" style="left:0px;top:575px;width:82px;height:1px;background:#81d4d4;"></div><div class="a" style="left:0px;top:601px;width:82px;height:1px;background:#81d4d4;"></div><div class="a" style="left:0px;top:601px;width:1px;height:27px;background:#81d4d4;"></div><div class="a" style="left:81px;top:601px;width:1px;height:27px;background:#81d4d4;"></div><div class="a" style="left:0px;top:601px;width:82px;height:1px;background:#81d4d4;"></div><div class="a" style="left:0px;top:627px;width:82px;height:1px;background:#81d4d4;"></div><div class="a" style="left:0px;top:627px;width:1px;height:27px;background:#aeb8e9;"></div><div class="a" style="left:81px;top:627px;width:1px;height:27px;background:#aeb8e9;"></div><div class="a" style="left:0px;top:627px;width:82px;height:1px;background:#aeb8e9;"></div><div class="a" style="left:0px;top:653px;width:82px;height:1px;background:#aeb8e9;"></div><div class="a" style="left:0px;top:653px;width:1px;height:27px;background:#81d4d4;"></div><div class="a" style="left:81px;top:653px;width:1px;height:27px;background:#81d4d4;"></div><div class="a" style="left:0px;top:653px;width:82px;height:1px;background:#81d4d4;"></div><div class="a" style="left:0px;top:679px;width:82px;height:1px;background:#81d4d4;"></div><div class="a" style="left:0px;top:679px;width:1px;height:27px;background:#81d4d4;"></div><div class="a" style="left:81px;top:679px;width:1px;height:27px;background:#81d4d4;"></div><div class="a" style="left:0px;top:679px;width:82px;height:1px;background:#81d4d4;"></div><div class="a" style="left:0px;top:705px;width:82px;height:1px;background:#81d4d4;"></div><div class="a c h" style="left:1px;top:408px;width:80px;height:38px;line-height:38px;">类型</div><div class="a c h" style="left:82px;top:408px;width:74px;height:38px;line-height:38px;">日期</div><div class="a c h" style="left:157px;top:408px;width:124px;height:38px;line-height:38px;">主场</div><div class="a c h" style="left:282px;top:408px;width:87px;height:38px;line-height:38px;">比分(半场)</div><div class="a c h" style="left:370px;top:408px;width:37px;height:38px;line-height:38px;">角球</div><div class="a c h" style="left:408px;top:408px;width:109px;height:38px;line-height:38px;">客场</div><div class="a c h" style="left:518px;top:428px;width:47px;height:18px;line-height:18px;">主</div><div class="a c h" style="left:566px;top:428px;width:82px;height:18px;line-height:18px;">让球</div><div class="a c h" style="left:649px;top:428px;width:50px;height:18px;line-height:18px;">客</div><div class="a c h" style="left:700px;top:428px;width:59px;height:18px;line-height:18px;">主</div><div class="a c h" style="left:760px;top:428px;width:59px;height:18px;line-height:18px;">和</div><div class="a c h" style="left:820px;top:428px;width:75px;height:18px;line-height:18px;">客</div><div class="a c h" style="left:896px;top:428px;width:36px;height:18px;line-height:18px;">胜负</div><div class="a c h" style="left:933px;top:428px;width:37px;height:18px;line-height:18px;">让球</div><div class="a c h" style="left:971px;top:428px;width:56px;height:18px;line-height:18px;">进球数</div><div class="a c ty" style="left:1px;top:447px;width:80px;height:25px;line-height:25px;">意甲</div><div class="a c" style="left:82px;top:447px;width:74px;height:25px;line-height:25px;">25-09-01</div><div class="a c" style="left:157px;top:447px;width:124px;height:25px;line-height:25px;">国际米兰</div><div class="a c" style="left:282px;top:447px;width:87px;height:25px;line-height:25px;"><span style="color:#d62222">1-2</span>(1-2)</div><div class="a c" style="left:370px;top:447px;width:37px;height:25px;line-height:25px;">13-2</div><div class="a c" style="left:408px;top:447px;width:109px;height:25px;line-height:25px;"><span style="color:#1b7f1b">乌迪内斯</span></div><div class="a c" style="left:518px;top:447px;width:47px;height:25px;line-height:25px;">1.02</div><div class="a c" style="left:566px;top:447px;width:82px;height:25px;line-height:25px;">球半/两</div><div class="a c" style="left:649px;top:447px;width:50px;height:25px;line-height:25px;">0.87</div><div class="a c" style="left:700px;top:447px;width:59px;height:25px;line-height:25px;">1.28</div><div class="a c" style="left:760px;top:447px;width:59px;height:25px;line-height:25px;">5.72</div><div class="a c" style="left:820px;top:447px;width:75px;height:25px;line-height:25px;">10.43</div><div class="a c" style="left:896px;top:447px;width:36px;height:25px;line-height:25px;"><span style="color:#d62222">胜</span></div><div class="a c" style="left:933px;top:447px;width:37px;height:25px;line-height:25px;"><span style="color:#d62222">赢</span></div><div class="a c" style="left:971px;top:447px;width:56px;height:25px;line-height:25px;"><span style="color:#1b7f1b">走</span></div><div class="a c ty" style="left:1px;top:473px;width:80px;height:25px;line-height:25px;">意甲</div><div class="a c" style="left:82px;top:473px;width:74px;height:25px;line-height:25px;">25-08-26</div><div class="a c" style="left:157px;top:473px;width:124px;height:25px;line-height:25px;"><span style="color:#1b7f1b">乌迪内斯</span></div><div class="a c" style="left:282px;top:473px;width:87px;height:25px;line-height:25px;"><span style="color:#d62222">1-1</span>(0-0)</div><div class="a c" style="left:370px;top:473px;width:37px;height:25px;line-height:25px;">5-1</div><div class="a c" style="left:408px;top:473px;width:109px;height:25px;line-height:25px;">维罗纳</div><div class="a c" style="left:518px;top:473px;width:47px;height:25px;line-height:25px;">1.00</div><div class="a c" style="left:566px;top:473px;width:82px;height:25px;line-height:25px;">半球</div><div class="a c" style="left:649px;top:473px;width:50px;height:25px;line-height:25px;">0.89</div><div class="a c" style="left:700px;top:473px;width:59px;height:25px;line-height:25px;">1.94</div><div class="a c" style="left:760px;top:473px;width:59px;height:25px;line-height:25px;">3.21</div><div class="a c" style="left:820px;top:473px;width:75px;height:25px;line-height:25px;">4.43</div><div class="a c" style="left:896px;top:473px;width:36px;height:25px;line-height:25px;"><span style="color:#1b7f1b">平</span></div><div class="a c" style="left:933px;top:473px;width:37px;height:25px;line-height:25px;"><span style="color:#1414a8">输</span></div><div class="a c" style="left:971px;top:473px;width:56px;height:25px;line-height:25px;"><span style="color:#1b7f1b">走</span></div><div class="a c ty" style="left:1px;top:499px;width:80px;height:25px;line-height:25px;">意杯</div><div class="a c" style="left:82px;top:499px;width:74px;height:25px;line-height:25px;">25-08-19</div><div class="a c" style="left:157px;top:499px;width:124px;height:25px;line-height:25px;"><span style="color:#1b7f1b">乌迪内斯</span></div><div class="a c" style="left:282px;top:499px;width:87px;height:25px;line-height:25px;"><span style="color:#d62222">2-0</span>(1-0)</div><div class="a c" style="left:370px;top:499px;width:37px;height:25px;line-height:25px;">3-5</div><div class="a c" style="left:408px;top:499px;width:109px;height:25px;line-height:25px;">凯勒雷斯</div><div class="a c" style="left:518px;top:499px;width:47px;height:25px;line-height:25px;">1.02</div><div class="a c" style="left:566px;top:499px;width:82px;height:25px;line-height:25px;">一/球半</div><div class="a c" style="left:649px;top:499px;width:50px;height:25px;line-height:25px;">0.86</div><div class="a c" style="left:700px;top:499px;width:59px;height:25px;line-height:25px;">1.37</div><div class="a c" style="left:760px;top:499px;width:59px;height:25px;line-height:25px;">4.69</div><div class="a c" style="left:820px;top:499px;width:75px;height:25px;line-height:25px;">7.95</div><div class="a c" style="left:896px;top:499px;width:36px;height:25px;line-height:25px;"><span style="color:#d62222">胜</span></div><div class="a c" style="left:933px;top:499px;width:37px;height:25px;line-height:25px;"><span style="color:#d62222">赢</span></div><div class="a c" style="left:971px;top:499px;width:56px;height:25px;line-height:25px;"><span style="color:#1414a8">小</span></div><div class="a c ty" style="left:1px;top:525px;width:80px;height:25px;line-height:25px;">球会友谊</div><div class="a c" style="left:82px;top:525px;width:74px;height:25px;line-height:25px;">25-08-09</div><div class="a c" style="left:157px;top:525px;width:124px;height:25px;line-height:25px;">云达不莱梅</div><div class="a c" style="left:282px;top:525px;width:87px;height:25px;line-height:25px;"><span style="color:#d62222">1-2</span>(0-2)</div><div class="a c" style="left:370px;top:525px;width:37px;height:25px;line-height:25px;">4-4</div><div class="a c" style="left:408px;top:525px;width:109px;height:25px;line-height:25px;"><span style="color:#1b7f1b">乌迪内斯</span></div><div class="a c" style="left:518px;top:525px;width:47px;height:25px;line-height:25px;">0.92</div><div class="a c" style="left:566px;top:525px;width:82px;height:25px;line-height:25px;">平手</div><div class="a c" style="left:649px;top:525px;width:50px;height:25px;line-height:25px;">0.90</div><div class="a c" style="left:700px;top:525px;width:59px;height:25px;line-height:25px;">2.44</div><div class="a c" style="left:760px;top:525px;width:59px;height:25px;line-height:25px;">3.60</div><div class="a c" style="left:820px;top:525px;width:75px;height:25px;line-height:25px;">2.54</div><div class="a c" style="left:896px;top:525px;width:36px;height:25px;line-height:25px;"><span style="color:#d62222">胜</span></div><div class="a c" style="left:933px;top:525px;width:37px;height:25px;line-height:25px;"><span style="color:#d62222">赢</span></div><div class="a c" style="left:971px;top:525px;width:56px;height:25px;line-height:25px;"><span style="color:#1b7f1b">走</span></div><div class="a c ty" style="left:1px;top:551px;width:80px;height:25px;line-height:25px;">球会友谊</div><div class="a c" style="left:82px;top:551px;width:74px;height:25px;line-height:25px;">25-08-09</div><div class="a c" style="left:157px;top:551px;width:124px;height:25px;line-height:25px;">云达不莱梅</div><div class="a c" style="left:282px;top:551px;width:87px;height:25px;line-height:25px;"><span style="color:#d62222">0-1</span>(0-1)</div><div class="a c" style="left:370px;top:551px;width:37px;height:25px;line-height:25px;">4-3</div><div class="a c" style="left:408px;top:551px;width:109px;height:25px;line-height:25px;"><span style="color:#1b7f1b">乌迪内斯</span></div><div class="a c" style="left:518px;top:551px;width:47px;height:25px;line-height:25px;"></div><div class="a c" style="left:566px;top:551px;width:82px;height:25px;line-height:25px;"></div><div class="a c" style="left:649px;top:551px;width:50px;height:25px;line-height:25px;"></div><div class="a c" style="left:700px;top:551px;width:59px;height:25px;line-height:25px;"></div><div class="a c" style="left:760px;top:551px;width:59px;height:25px;line-height:25px;"></div><div class="a c" style="left:820px;top:551px;width:75px;height:25px;line-height:25px;"></div><div class="a c" style="left:896px;top:551px;width:36px;height:25px;line-height:25px;"><span style="color:#d62222">胜</span></div><div class="a c" style="left:933px;top:551px;width:37px;height:25px;line-height:25px;"></div><div class="a c" style="left:971px;top:551px;width:56px;height:25px;line-height:25px;"></div><div class="a c ty" style="left:1px;top:577px;width:80px;height:25px;line-height:25px;">球会友谊</div><div class="a c" style="left:82px;top:577px;width:74px;height:25px;line-height:25px;">25-08-03</div><div class="a c" style="left:157px;top:577px;width:124px;height:25px;line-height:25px;">特温特</div><div class="a c" style="left:282px;top:577px;width:87px;height:25px;line-height:25px;"><span style="color:#d62222">0-1</span>(0-0)</div><div class="a c" style="left:370px;top:577px;width:37px;height:25px;line-height:25px;">5-8</div><div class="a c" style="left:408px;top:577px;width:109px;height:25px;line-height:25px;"><span style="color:#1b7f1b">乌迪内斯</span></div><div class="a c" style="left:518px;top:577px;width:47px;height:25px;line-height:25px;">0.90</div><div class="a c" style="left:566px;top:577px;width:82px;height:25px;line-height:25px;">受平/半</div><div class="a c" style="left:649px;top:577px;width:50px;height:25px;line-height:25px;">0.92</div><div class="a c" style="left:700px;top:577px;width:59px;height:25px;line-height:25px;">2.63</div><div class="a c" style="left:760px;top:577px;width:59px;height:25px;line-height:25px;">3.44</div><div class="a c" style="left:820px;top:577px;width:75px;height:25px;line-height:25px;">2.39</div><div class="a c" style="left:896px;top:577px;width:36px;height:25px;line-height:25px;"><span style="color:#d62222">胜</span></div><div class="a c" style="left:933px;top:577px;width:37px;height:25px;line-height:25px;"><span style="color:#d62222">赢</span></div><div class="a c" style="left:971px;top:577px;width:56px;height:25px;line-height:25px;"><span style="color:#1414a8">小</span></div><div class="a c ty" style="left:1px;top:603px;width:80px;height:25px;line-height:25px;">球会友谊</div><div class="a c" style="left:82px;top:603px;width:74px;height:25px;line-height:25px;">25-07-31</div><div class="a c" style="left:157px;top:603px;width:124px;height:25px;line-height:25px;">斯特拉斯堡(中)</div><div class="a c" style="left:282px;top:603px;width:87px;height:25px;line-height:25px;"><span style="color:#d62222">1-2</span>(1-0)</div><div class="a c" style="left:370px;top:603px;width:37px;height:25px;line-height:25px;">1-2</div><div class="a c" style="left:408px;top:603px;width:109px;height:25px;line-height:25px;"><span style="color:#1b7f1b">乌迪内斯</span></div><div class="a c" style="left:518px;top:603px;width:47px;height:25px;line-height:25px;">0.83</div><div class="a c" style="left:566px;top:603px;width:82px;height:25px;line-height:25px;">平/半</div><div class="a c" style="left:649px;top:603px;width:50px;height:25px;line-height:25px;">0.99</div><div class="a c" style="left:700px;top:603px;width:59px;height:25px;line-height:25px;">2.18</div><div class="a c" style="left:760px;top:603px;width:59px;height:25px;line-height:25px;">3.42</div><div class="a c" style="left:820px;top:603px;width:75px;height:25px;line-height:25px;">2.87</div><div class="a c" style="left:896px;top:603px;width:36px;height:25px;line-height:25px;"><span style="color:#d62222">胜</span></div><div class="a c" style="left:933px;top:603px;width:37px;height:25px;line-height:25px;"><span style="color:#d62222">赢</span></div><div class="a c" style="left:971px;top:603px;width:56px;height:25px;line-height:25px;"><span style="color:#d62222">大</span></div><div class="a c ty" style="left:1px;top:629px;width:80px;height:25px;line-height:25px;">国际友谊</div><div class="a c" style="left:82px;top:629px;width:74px;height:25px;line-height:25px;">25-07-26</div><div class="a c" style="left:157px;top:629px;width:124px;height:25px;line-height:25px;"><span style="color:#1b7f1b">乌迪内斯(中)</span></div><div class="a c" style="left:282px;top:629px;width:87px;height:25px;line-height:25px;"><span style="color:#d62222">3-0</span>(2-0)</div><div class="a c" style="left:370px;top:629px;width:37px;height:25px;line-height:25px;">2-2</div><div class="a c" style="left:408px;top:629px;width:109px;height:25px;line-height:25px;">卡塔尔</div><div class="a c" style="left:518px;top:629px;width:47px;height:25px;line-height:25px;"></div><div class="a c" style="left:566px;top:629px;width:82px;height:25px;line-height:25px;"></div><div class="a c" style="left:649px;top:629px;width:50px;height:25px;line-height:25px;"></div><div class="a c" style="left:700px;top:629px;width:59px;height:25px;line-height:25px;">2.33</div><div class="a c" style="left:760px;top:629px;width:59px;height:25px;line-height:25px;">3.48</div><div class="a c" style="left:820px;top:629px;width:75px;height:25px;line-height:25px;">2.60</div><div class="a c" style="left:896px;top:629px;width:36px;height:25px;line-height:25px;"><span style="color:#d62222">胜</span></div><div class="a c" style="left:933px;top:629px;width:37px;height:25px;line-height:25px;"></div><div class="a c" style="left:971px;top:629px;width:56px;height:25px;line-height:25px;"><span style="color:#1b7f1b">走</span></div><div class="a c ty" style="left:1px;top:655px;width:80px;height:25px;line-height:25px;">球会友谊</div><div class="a c" style="left:82px;top:655px;width:74px;height:25px;line-height:25px;">25-07-23</div><div class="a c" style="left:157px;top:655px;width:124px;height:25px;line-height:25px;"><span style="color:#1b7f1b">乌迪内斯(中)</span></div><div class="a c" style="left:282px;top:655px;width:87px;height:25px;line-height:25px;"><span style="color:#d62222">1-3</span>(0-2)</div><div class="a c" style="left:370px;top:655px;width:37px;height:25px;line-height:25px;">5-3</div><div class="a c" style="left:408px;top:655px;width:109px;height:25px;line-height:25px;">迪拜青年国民</div><div class="a c" style="left:518px;top:655px;width:47px;height:25px;line-height:25px;">0.80</div><div class="a c" style="left:566px;top:655px;width:82px;height:25px;line-height:25px;">半/一</div><div class="a c" style="left:649px;top:655px;width:50px;height:25px;line-height:25px;">1.02</div><div class="a c" style="left:700px;top:655px;width:59px;height:25px;line-height:25px;">1.66</div><div class="a c" style="left:760px;top:655px;width:59px;height:25px;line-height:25px;">3.99</div><div class="a c" style="left:820px;top:655px;width:75px;height:25px;line-height:25px;">4.27</div><div class="a c" style="left:896px;top:655px;width:36px;height:25px;line-height:25px;"><span style="color:#1414a8">负</span></div><div class="a c" style="left:933px;top:655px;width:37px;height:25px;line-height:25px;"><span style="color:#1414a8">输</span></div><div class="a c" style="left:971px;top:655px;width:56px;height:25px;line-height:25px;"><span style="color:#d62222">大</span></div><div class="a c ty" style="left:1px;top:681px;width:80px;height:25px;line-height:25px;">球会友谊</div><div class="a c" style="left:82px;top:681px;width:74px;height:25px;line-height:25px;">25-07-18</div><div class="a c" style="left:157px;top:681px;width:124px;height:25px;line-height:25px;"><span style="color:#1b7f1b">乌迪内斯(中)</span></div><div class="a c" style="left:282px;top:681px;width:87px;height:25px;line-height:25px;"><span style="color:#d62222">1-1</span>(1-1)</div><div class="a c" style="left:370px;top:681px;width:37px;height:25px;line-height:25px;">9-1</div><div class="a c" style="left:408px;top:681px;width:109px;height:25px;line-height:25px;">欧帕提亚</div><div class="a c" style="left:518px;top:681px;width:47px;height:25px;line-height:25px;">0.85</div><div class="a c" style="left:566px;top:681px;width:82px;height:25px;line-height:25px;">两球</div><div class="a c" style="left:649px;top:681px;width:50px;height:25px;line-height:25px;">0.97</div><div class="a c" style="left:700px;top:681px;width:59px;height:25px;line-height:25px;">1.15</div><div class="a c" style="left:760px;top:681px;width:59px;height:25px;line-height:25px;">6.56</div><div class="a c" style="left:820px;top:681px;width:75px;height:25px;line-height:25px;">13.55</div><div class="a c" style="left:896px;top:681px;width:36px;height:25px;line-height:25px;"><span style="color:#1b7f1b">平</span></div><div class="a c" style="left:933px;top:681px;width:37px;height:25px;line-height:25px;"><span style="color:#1414a8">输</span></div><div class="a c" style="left:971px;top:681px;width:56px;height:25px;line-height:25px;"><span style="color:#1414a8">小</span></div><div class="a c" style="left:1px;top:707px;width:1026px;height:25px;line-height:25px;letter-spacing:0.2px;">近<span style="color:#d62222">10</span>场,胜7平2负1, 胜率:<span style="color:#d62222">70%</span> 让胜率:<span style="color:#d62222">62.5%</span> 大率:<span style="color:#d62222">22.2%</span> 单率:<span style="color:#d62222">60%</span></div><div class="a sel" style="left:548px;top:407px;width:59px;height:17px;"><span style="position:absolute;left:5px;top:0;line-height:17px;font-size:13px;">Crow*</span><svg width="10" height="6" viewBox="0 0 10 6" style="position:absolute;right:4px;top:5px"><path d="M1 1 L5 5 L9 1" fill="none" stroke="#000" stroke-width="1.9" stroke-linecap="round" stroke-linejoin="round"/></svg></div><div class="a sel" style="left:617px;top:407px;width:49px;height:17px;"><span style="position:absolute;left:4px;top:0;line-height:17px;font-size:13px;">终指</span><svg width="10" height="6" viewBox="0 0 10 6" style="position:absolute;right:4px;top:5px"><path d="M1 1 L5 5 L9 1" fill="none" stroke="#000" stroke-width="1.9" stroke-linecap="round" stroke-linejoin="round"/></svg></div><div class="a sel" style="left:733px;top:407px;width:68px;height:17px;"><span style="position:absolute;left:4px;top:0;line-height:17px;font-size:13px;">平均值</span><svg width="10" height="6" viewBox="0 0 10 6" style="position:absolute;right:4px;top:5px"><path d="M1 1 L5 5 L9 1" fill="none" stroke="#000" stroke-width="1.9" stroke-linecap="round" stroke-linejoin="round"/></svg></div><div class="a sel" style="left:810px;top:407px;width:49px;height:17px;"><span style="position:absolute;left:4px;top:0;line-height:17px;font-size:13px;">终指</span><svg width="10" height="6" viewBox="0 0 10 6" style="position:absolute;right:4px;top:5px"><path d="M1 1 L5 5 L9 1" fill="none" stroke="#000" stroke-width="1.9" stroke-linecap="round" stroke-linejoin="round"/></svg></div><div class="a sel" style="left:936px;top:407px;width:49px;height:17px;"><span style="position:absolute;left:4px;top:0;line-height:17px;font-size:13px;">全场</span><svg width="10" height="6" viewBox="0 0 10 6" style="position:absolute;right:4px;top:5px"><path d="M1 1 L5 5 L9 1" fill="none" stroke="#000" stroke-width="1.9" stroke-linecap="round" stroke-linejoin="round"/></svg></div></body></html>
